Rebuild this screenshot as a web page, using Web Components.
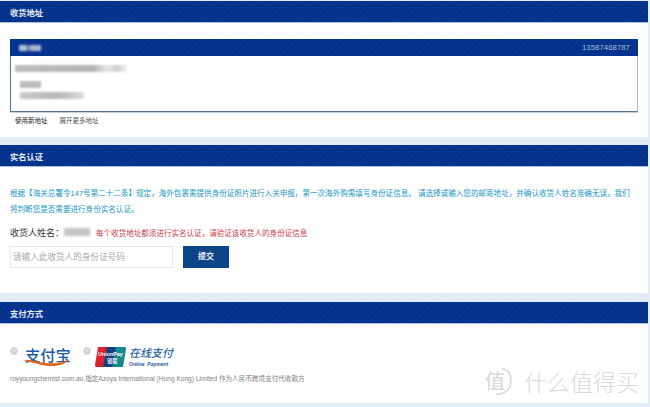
<!DOCTYPE html>
<html lang="zh">
<head>
<meta charset="utf-8">
<title>结算</title>
<style>
    html, body { margin: 0; padding: 0; }
    body {
        width: 650px;
        height: 407px;
        overflow: hidden;
        position: relative;
        background: #e3ebf5;
        font-family: "Liberation Sans", "Noto Sans CJK SC", sans-serif;
    }
    main { display: block; padding: 1px 2px 0 0; }
</style>
</head>
<body>
<main>
    <panel-box heading="收货地址" height="136">
        <address-card phone="13587468787"></address-card>
        <address-links></address-links>
    </panel-box>
    <panel-box heading="实名认证" height="148" gap="8">
        <id-verify></id-verify>
    </panel-box>
    <panel-box heading="支付方式" height="101" gap="9">
        <pay-methods></pay-methods>
    </panel-box>
</main>
<site-watermark></site-watermark>

<script>
const stripes = `repeating-linear-gradient(135deg, #04318c 0, #04318c 2px, #07368f 2px, #07368f 4px)`;

class PanelBox extends HTMLElement {
    constructor() {
        super();
        this.attachShadow({ mode: 'open' });
    }

    connectedCallback() {
        const gap = this.getAttribute('gap') || 0;
        const height = this.getAttribute('height') || 100;
        this.shadowRoot.innerHTML = `
            <style>
                :host {
                    display: block;
                    margin-top: ${gap}px;
                    height: ${height}px;
                    background: #fff;
                }
                .head {
                    height: 22px;
                    box-sizing: border-box;
                    padding-left: 10px;
                    background: ${stripes};
                    border-bottom: 1px solid #a9c0dc;
                    color: #e8edf6;
                    font-size: 8.25px;
                    font-weight: bold;
                    line-height: 25px;
                }
                .body { padding: 0 10px; }
            </style>
            <div class="head">${this.getAttribute('heading')}</div>
            <div class="body"><slot></slot></div>
        `;
    }
}

class AddressCard extends HTMLElement {
    constructor() {
        super();
        this.attachShadow({ mode: 'open' });
    }

    connectedCallback() {
        this.shadowRoot.innerHTML = `
            <style>
                :host {
                    display: block;
                    margin-top: 16px;
                    width: 628px;
                    height: 73px;
                    box-sizing: border-box;
                    border: 1px solid #4d7796;
                    border-top: 0;
                    border-right-color: #a9bccb;
                    border-radius: 1px;
                    box-shadow: 0 1px 0 #c3d1dd;
                }
                .bar {
                    height: 17px;
                    margin: 0 -1px;
                    background: ${stripes};
                    display: flex;
                    align-items: center;
                    justify-content: space-between;
                    padding: 0 8px 0 9px;
                    color: #a9b9d4;
                    font-size: 7.85px;
                }
                .name { width: 22px; height: 6px; background: linear-gradient(90deg, #b4c0d6 30%, #5a74aa 42%, #a8b6d0 55%); filter: blur(1px); }
                .lines { padding: 9px 0 0 4px; display: flex; flex-direction: column; }
                .lines div { filter: blur(1.3px); height: 7px; }
                .l1 { width: 112px; margin-bottom: 9px; background: linear-gradient(90deg, #bcbcbf 0, #b4b4b7 70%, #e6e6e7 82%, #cfcfd1 92%, #f2f2f2 100%); }
                .l2 { width: 21px; margin: 0 0 4px 5px; background: #bcbcbf; }
                .l3 { width: 64px; margin-left: 5px; background: linear-gradient(90deg, #c8c8ca, #b6b6b9 60%, #dedee0); }
            </style>
            <div class="bar"><div class="name"></div><span>${this.getAttribute('phone')}</span></div>
            <div class="lines"><div class="l1"></div><div class="l2"></div><div class="l3"></div></div>
        `;
    }
}

class AddressLinks extends HTMLElement {
    constructor() {
        super();
        this.attachShadow({ mode: 'open' });
    }

    connectedCallback() {
        this.shadowRoot.innerHTML = `
            <style>
                :host {
                    display: flex;
                    gap: 12px;
                    padding: 3px 0 0 5px;
                    font-size: 6.5px;
                    line-height: 12px;
                    color: #222;
                }
                span + span { color: #555; }
            </style>
            <span>使用新地址</span><span>展开更多地址</span>
        `;
    }
}

class IdVerify extends HTMLElement {
    constructor() {
        super();
        this.attachShadow({ mode: 'open' });
    }

    connectedCallback() {
        this.shadowRoot.innerHTML = `
            <style>
                :host { display: block; padding-top: 19px; }
                .note {
                    margin: 0;
                    color: #1797c4;
                    font-size: 7.57px;
                    line-height: 16px;
                    white-space: nowrap;
                }
                .row {
                    display: flex;
                    align-items: center;
                    margin-top: 6px;
                    height: 16px;
                }
                .label { color: #333; font-size: 9px; width: 54px; white-space: nowrap; }
                .blurred { width: 26px; height: 8px; background: #c2c2c5; filter: blur(1.8px); margin-right: 6px; }
                .warn { color: #c8404a; font-size: 7.55px; white-space: nowrap; }
                .form { display: flex; gap: 10px; margin-top: 6px; }
                .input {
                    width: 163px;
                    height: 22px;
                    box-sizing: border-box;
                    border: 1px solid #e6e8ea;
                    padding-left: 2px;
                    color: #a8a8a8;
                    font-size: 8.6px;
                    line-height: 20px;
                }
                .btn {
                    width: 46px;
                    height: 22px;
                    background: #0c4588;
                    color: #e8eef6;
                    font-size: 8px;
                    font-weight: bold;
                    line-height: 22px;
                    text-align: center;
                }
            </style>
            <p class="note">根据【海关总署令147号第二十二条】规定，海外包裹需提供身份证照片进行入关申报，第一次海外购需填写身份证信息。 请选择或输入您的邮寄地址，并确认收货人姓名准确无误，我们<br>将判断您是否需要进行身份实名认证。</p>
            <div class="row">
                <span class="label">收货人姓名：</span>
                <div class="blurred"></div>
                <span class="warn">每个收货地址都须进行实名认证，请验证该收货人的身份证信息</span>
            </div>
            <div class="form">
                <div class="input">请输入此收货人的身份证号码</div>
                <div class="btn">提交</div>
            </div>
        `;
    }
}

class PayMethods extends HTMLElement {
    constructor() {
        super();
        this.attachShadow({ mode: 'open' });
    }

    connectedCallback() {
        this.shadowRoot.innerHTML = `
            <style>
                :host { display: block; padding-top: 22px; }
                .methods { display: flex; align-items: flex-start; height: 28px; }
                .radio {
                    flex: none;
                    width: 6px;
                    height: 6px;
                    margin-top: 1px;
                    border-radius: 50%;
                    background: radial-gradient(circle at 50% 40%, #e4e4e4, #c4c4c4);
                    border: 1px solid #d8d8d8;
                }
                .ali { position: relative; width: 48px; height: 20px; margin: 0 12px 0 5px; }
                .ali b {
                    position: absolute;
                    left: 2px;
                    top: 0;
                    color: #1b5ca8;
                    font-size: 15.3px;
                    line-height: 19px;
                    font-weight: 500;
                    white-space: nowrap;
                }
                .ali svg { position: absolute; left: 0; top: 0; }
                .union { display: block; margin: 1px 3px 0 4px; flex: none; }
                .online { color: #2a5f9c; margin-top: 1px; }
                .online b {
                    display: block;
                    font-size: 11px;
                    line-height: 13px;
                    font-weight: 500;
                    font-style: italic;
                    white-space: nowrap;
                }
                .online i {
                    display: block;
                    margin-top: 1px;
                    font-size: 5px;
                    line-height: 6px;
                    font-weight: bold;
                    color: #1d5a9e;
                    white-space: nowrap;
                }
                .legal { margin: 0; color: #808080; font-size: 6.6px; line-height: 10px; white-space: nowrap; }
            </style>
            <div class="methods">
                <div class="radio"></div>
                <div class="ali">
                    <b>支付宝</b>
                    <svg width="48" height="20" viewBox="0 0 48 20"><path d="M0 15 C8 12 13 16 22 17 C31 18 40 17 47 13 C41 20 31 21 22 19.5 C13 18 8 15.5 0 15 Z" fill="#e2651c"/></svg>
                </div>
                <div class="radio"></div>
                <svg class="union" width="31" height="20" viewBox="0 0 31 20">
                    <path d="M3 0 H13 L10 20 H1 Q0 20 0 18 Z" fill="#d8232f"/>
                    <path d="M12 0 H22 L19 20 H8 Z" fill="#0f3f84"/>
                    <path d="M21 0 H30 Q31 0 31 2 L28 20 H17 Z" fill="#138a8c"/>
                    <text x="3" y="9" font-family="Liberation Sans" font-size="5.4" font-weight="bold" fill="#fff">UnionPay</text>
                    <text x="12" y="16" font-family="Noto Sans CJK SC" font-size="5.2" font-weight="bold" fill="#e8f1f6">银联</text>
                </svg>
                <div class="online"><b>在线支付</b><i>Online&nbsp; Payment</i></div>
            </div>
            <p class="legal">royyoungchemist.com.au 指定Azoya International (Hong Kong) Limited 作为人民币跨境支付代收款方</p>
        `;
    }
}

class SiteWatermark extends HTMLElement {
    constructor() {
        super();
        this.attachShadow({ mode: 'open' });
    }

    connectedCallback() {
        this.shadowRoot.innerHTML = `
            <style>
                :host {
                    position: absolute;
                    left: 485px;
                    top: 367px;
                    display: flex;
                    align-items: center;
                    gap: 12px;
                    color: #d9dbde;
                    font-family: "Noto Sans CJK SC", sans-serif;
                    white-space: nowrap;
                }
                .mark {
                    position: relative;
                    width: 27px;
                    height: 29px;
                    font-size: 20px;
                    line-height: 28px;
                    font-weight: 500;
                }
                .mark svg { position: absolute; left: 0; top: 0; }
                .name { font-size: 23px; line-height: 29px; font-weight: 300; }
            </style>
            <div class="mark">值<svg width="27" height="29" viewBox="0 0 27 29"><path d="M17 1.5 C24 3 26 9 26 14 C26 22 20 27 11 27.5" fill="none" stroke="#d9dbde" stroke-width="1.6"/></svg></div>
            <div class="name">什么值得买</div>
        `;
    }
}

customElements.define('panel-box', PanelBox);
customElements.define('address-card', AddressCard);
customElements.define('address-links', AddressLinks);
customElements.define('id-verify', IdVerify);
customElements.define('pay-methods', PayMethods);
customElements.define('site-watermark', SiteWatermark);
</script>
</body>
</html>
